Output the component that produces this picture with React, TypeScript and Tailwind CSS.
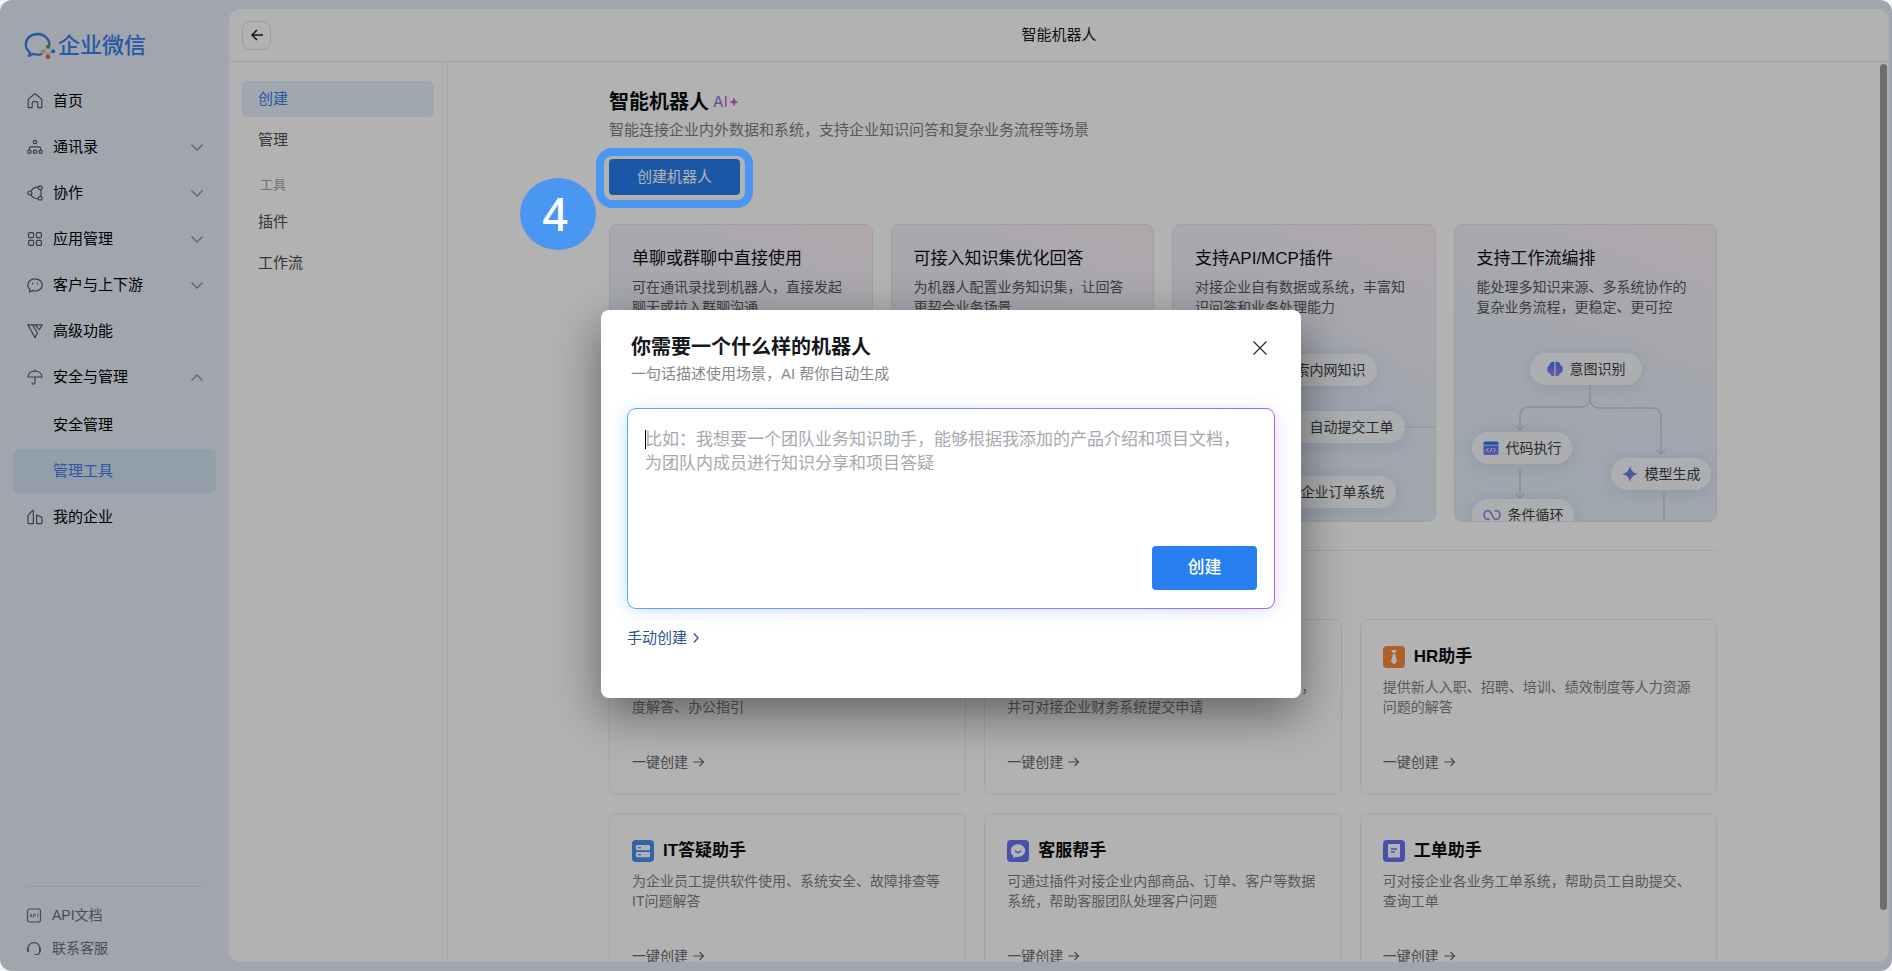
import * as React from "react";
import { clsx } from "clsx";

// ─── Sidebar icons ────────────────────────────────────────────────────────────

function Icon({ children, className }: { children: React.ReactNode; className?: string }) {
  return (
    <svg
      viewBox="0 0 16 16"
      fill="none"
      stroke="currentColor"
      strokeWidth="1.2"
      strokeLinecap="round"
      strokeLinejoin="round"
      aria-hidden="true"
      className={clsx("h-4 w-4 shrink-0", className)}
    >
      {children}
    </svg>
  );
}

const HomeIcon = (
  <Icon>
    <path d="M1.2 14.6V6.4L7 1.3a1.5 1.5 0 0 1 2 0l5.8 5.1v8.2h-4V10a1.4 1.4 0 0 0-1.4-1.4H6.6A1.4 1.4 0 0 0 5.2 10v4.6z" />
  </Icon>
);

const ContactsIcon = (
  <Icon>
    <circle cx="8" cy="3" r="1.7" />
    <circle cx="2.4" cy="12.8" r="1.7" />
    <circle cx="8" cy="12.8" r="1.7" />
    <circle cx="13.6" cy="12.8" r="1.7" />
    <path d="M2.4 11V9.4a1.6 1.6 0 0 1 1.6-1.6h8a1.6 1.6 0 0 1 1.6 1.6V11" />
  </Icon>
);

const CollabIcon = (
  <Icon>
    <circle cx="2.9" cy="8" r="2" />
    <circle cx="13.2" cy="2.8" r="1.9" />
    <circle cx="13.2" cy="13.2" r="1.9" />
    <path d="M4 6.2C5.6 3.6 8 2 11.2 2.2M4 9.8c1.6 2.6 4 4.2 7.2 4M14 4.7v6.6" />
  </Icon>
);

const AppsIcon = (
  <Icon>
    <rect x="1.6" y="1.6" width="5" height="5" rx="1" />
    <rect x="9.4" y="1.6" width="5" height="5" rx="1" />
    <rect x="1.6" y="9.4" width="5" height="5" rx="1" />
    <rect x="9.4" y="9.4" width="5" height="5" rx="1" />
  </Icon>
);

const CustomerIcon = (
  <Icon>
    <path d="M8 1.8c4 0 7.2 2.7 7.2 6.1S12 14 8 14c-.9 0-1.8-.1-2.6-.4L2.6 15l.3-2.7C1.6 11.2.8 9.6.8 7.9c0-3.4 3.2-6.1 7.2-6.1z" />
    <path d="M5.6 6.2v.6M10.4 6.2v.6" />
  </Icon>
);

const AdvancedIcon = (
  <Icon>
    <path d="M.8 1.8h4.6l5 8.2L8 14.6zM8 1.8h7.2l-2.8 4.9zM5.4 1.8H8" />
  </Icon>
);

const UmbrellaIcon = (
  <Icon>
    <path d="M8 .8v1.4M.9 8C1.2 4.6 4.2 2.2 8 2.2S14.8 4.6 15.1 8zM8 8v5.6a1.5 1.5 0 0 1-3 .2" />
  </Icon>
);

const CompanyIcon = (
  <Icon>
    <path d="M1 6.4 5.5 1.6a.5.5 0 0 1 .9.3v12.7H2a1 1 0 0 1-1-1zM9.6 6l4.5 1.9a1.4 1.4 0 0 1 .9 1.3v4.4a1 1 0 0 1-1 1H9.6z" />
  </Icon>
);

function Chevron({ open }: { open?: boolean }) {
  return (
    <svg viewBox="0 0 12 7" fill="none" stroke="#8b9099" strokeWidth="1.3" aria-hidden="true" className="h-[7px] w-3">
      {open ? <path d="M.5 6.5 6 1l5.5 5.5" /> : <path d="M.5.5 6 6 11.5.5" />}
    </svg>
  );
}

function Logo() {
  return (
    <svg viewBox="0 0 32 28" fill="none" aria-hidden="true" className="h-7 w-8">
      <path
        d="M25.5 13.5C25.5 7 20.5 2 13.5 2S1.8 7 1.8 12.6c0 3.2 1.6 6 4.1 7.9l-.8 3.4 4-1.9c2.6.8 5.7.9 8.3.1"
        stroke="#3580ea"
        strokeWidth="2.3"
        strokeLinecap="round"
        strokeLinejoin="round"
      />
      <path d="m20.500 19.500 3.900-4 3.900 3.900-4 4.200z" fill="#dfe4ee" />
      <path d="m23.800 14 3.200 3-1 .8zM18.500 20.500l3-3.700.9 1zM24.500 25.500l-3.400-4.200 1-.8zM29.500 18.800l-3.300 3.600-.9-1z" fill="#9fb5cf" />
      <circle cx="24" cy="14.6" r="2.1" fill="#4fae33" />
      <circle cx="19" cy="19.6" r="2.1" fill="#f0b53a" />
      <circle cx="24" cy="24.8" r="2.2" fill="#ee5a24" />
      <circle cx="29.2" cy="19.3" r="2" fill="#3580ea" />
    </svg>
  );
}

// ─── Data ─────────────────────────────────────────────────────────────────────

interface NavItem {
  label: string;
  icon: React.ReactNode;
  expandable?: boolean;
  children?: { label: string; active?: boolean }[];
}

const NAV: NavItem[] = [
  { label: "首页", icon: HomeIcon },
  { label: "通讯录", icon: ContactsIcon, expandable: true },
  { label: "协作", icon: CollabIcon, expandable: true },
  { label: "应用管理", icon: AppsIcon, expandable: true },
  { label: "客户与上下游", icon: CustomerIcon, expandable: true },
  { label: "高级功能", icon: AdvancedIcon },
  {
    label: "安全与管理",
    icon: UmbrellaIcon,
    expandable: true,
    children: [{ label: "安全管理" }, { label: "管理工具", active: true }],
  },
  { label: "我的企业", icon: CompanyIcon },
];

const FEATURES = [
  { title: "单聊或群聊中直接使用", text: "可在通讯录找到机器人，直接发起聊天或拉入群聊沟通" },
  { title: "可接入知识集优化回答", text: "为机器人配置业务知识集，让回答更契合业务场景" },
  { title: "支持API/MCP插件", text: "对接企业自有数据或系统，丰富知识问答和业务处理能力", art: <PluginArt /> },
  { title: "支持工作流编排", text: "能处理多知识来源、多系统协作的复杂业务流程，更稳定、更可控", art: <WorkflowArt /> },
];

const TEMPLATES = [
  {
    title: "行政助手",
    color: "bg-[#3f8cf0]",
    text: "提供考勤、假期、福利、资产等各项行政管理类制度解答、办公指引",
    glyph: <path d="M6 5h10v12H6zM9 9h4M9 12h4" stroke="#fff" strokeWidth="1.6" />,
  },
  {
    title: "财务助手",
    color: "bg-[#f5a623]",
    text: "提供报销、差旅、预算、发票等财务制度的解答，并可对接企业财务系统提交申请",
    glyph: <path d="m7 5 4 5 4-5M7 11h8M7 14h8M11 10v7" stroke="#fff" strokeWidth="1.6" />,
  },
  {
    title: "HR助手",
    color: "bg-[#fa8a3c]",
    text: "提供新人入职、招聘、培训、绩效制度等人力资源问题的解答",
    glyph: <path d="M8 4h6l-1.800 3h-2.400zM9.900 8h2.200l1.900 7.500-3 3-3-3z" fill="#fff" />,
  },
  {
    title: "IT答疑助手",
    color: "bg-[#4591f2]",
    text: "为企业员工提供软件使用、系统安全、故障排查等IT问题解答",
    glyph: (
      <>
        <rect x="4" y="5" width="14" height="5.2" rx="1.2" fill="#fff" />
        <rect x="4" y="12" width="14" height="5.2" rx="1.2" fill="#fff" />
        <path d="M6 7.600h3M6 14.600h3" stroke="#4591f2" strokeWidth="1.4" />
      </>
    ),
  },
  {
    title: "客服帮手",
    color: "bg-[#6474f5]",
    text: "可通过插件对接企业内部商品、订单、客户等数据系统，帮助客服团队处理客户问题",
    glyph: (
      <>
        <path d="M11 4.200c4 0 7.200 2.900 7.200 6.400S15 17 11 17c-.7 0-1.400-.1-2-.3L6.200 18l-.3-2.500a6.100 6.100 0 0 1-2.100-4.900C3.800 7.100 7 4.200 11 4.200z" fill="#fff" />
        <path d="M8.500 11c.8 2 4.200 2 5 0" stroke="#6474f5" strokeWidth="1.4" strokeLinecap="round" />
      </>
    ),
  },
  {
    title: "工单助手",
    color: "bg-[#6474f5]",
    text: "可对接企业各业务工单系统，帮助员工自助提交、查询工单",
    glyph: (
      <>
        <path d="M5 5a1 1 0 0 1 1-1h10a1 1 0 0 1 1 1v13l-1.500-1-1.500 1-1.500-1-1.500 1-1.500-1-1.500 1-1.500-1L5 18z" fill="#fff" />
        <path d="M8 9h6M8 12h4" stroke="#6474f5" strokeWidth="1.4" />
      </>
    ),
  },
];

// ─── Feature card artwork ─────────────────────────────────────────────────────

function Pill({ children, className }: { children: React.ReactNode; className: string }) {
  return (
    <div
      className={clsx(
        "absolute flex h-8 items-center gap-[7px] rounded-full bg-[#f8f9fb] text-sm whitespace-nowrap text-[#3a3f47] shadow-[0_2px_18px_rgba(130,165,225,0.3)]",
        className,
      )}
    >
      {children}
    </div>
  );
}

function PluginArt() {
  return (
    <div className="absolute inset-0">
      <svg viewBox="0 0 264 298" fill="none" aria-hidden="true" className="absolute top-0 left-0 h-[298px] w-[264px]">
        <path d="M200 202h64" stroke="#cbdcf2" strokeWidth="1.5" />
      </svg>
      <Pill className="top-[129px] right-[58px] pr-[11px] pl-8">检索内网知识</Pill>
      <Pill className="top-[186px] right-[30px] pr-[11px] pl-8">自动提交工单</Pill>
      <Pill className="top-[251px] right-[39px] pr-[11px] pl-8">企业订单系统</Pill>
    </div>
  );
}

function WorkflowArt() {
  return (
    <div className="absolute inset-0">
      <svg viewBox="0 0 264 298" fill="none" stroke="#cbc7e8" strokeWidth="1.3" aria-hidden="true" className="absolute top-0 left-0 h-[298px] w-[264px]">
        <defs>
          <linearGradient id="artFill" x1="0" y1="0" x2="0" y2="1">
            <stop offset="0" stopColor="#3b7df0" />
            <stop offset="1" stopColor="#9a7df0" />
          </linearGradient>
        </defs>
        <path d="M135 159v14q0 9-9 9H74q-9 0-9 9v14M61 201l4 4 4-4" />
        <path d="M135 173q0 10 9 10h53q9 0 9 9v37M202 225l4 4 4-4" />
        <path d="M65 244v29M61 269l4 4 4-4M209 268v30" />
      </svg>
      <Pill className="top-[128px] left-[75px] pr-4 pl-[17px]">
        <svg viewBox="0 0 16 16" aria-hidden="true" className="h-4 w-4">
          <path d="M7.400 1v14C5 15.600 3.400 14 3.200 12.400 1.200 12 .2 10.400.4 8.800-.2 6.800.8 5 2.400 4.400 2.800 2 5 .4 7.400 1zM8.600 1v14c2.400.6 4-1 4.200-2.600 2-.4 3-2 2.800-3.600.6-2-.4-3.800-2-4.400C13.200 2 11 .4 8.600 1z" fill="url(#artFill)" />
        </svg>
        意图识别
      </Pill>
      <Pill className="top-[207px] left-[17px] pr-2.5 pl-[11px]">
        <svg viewBox="0 0 16 16" fill="none" aria-hidden="true" className="h-4 w-4">
          <path d="M2 1.500h12a1.500 1.500 0 0 1 1.500 1.500v1.800H.5V3A1.500 1.500 0 0 1 2 1.500z" fill="#2f74e6" />
          <path d="M.5 5.600h15v7.900A1.500 1.500 0 0 1 14 15H2a1.500 1.500 0 0 1-1.500-1.500z" fill="url(#artFill)" />
          <path d="M5.500 8 3.500 10l2 2M10.500 8l2 2-2 2M8.800 8l-1.600 4" stroke="#fff" />
        </svg>
        代码执行
      </Pill>
      <Pill className="top-[233px] left-[156px] pr-2.5 pl-[11px]">
        <svg viewBox="0 0 16 16" aria-hidden="true" className="h-4 w-4">
          <path d="M8 0c.9 4.600 3 6.900 8 8-5 1.100-7.100 3.400-8 8-.9-4.600-3-6.900-8-8 5-1.100 7.100-3.400 8-8z" fill="url(#artFill)" />
        </svg>
        模型生成
      </Pill>
      <Pill className="top-[274px] left-[17px] pr-2.5 pl-[11px]">
        <svg viewBox="0 0 18 16" fill="none" stroke="#9187ea" strokeWidth="1.7" aria-hidden="true" className="h-4 w-[18px]">
          <path d="M6.500 12C3.500 13.500 1 11 1 8s2.500-5.500 5.500-4c2 1.200 3 6.800 5 8 3 1.500 5.500-1 5.500-4s-2.500-5.500-5.500-4" />
        </svg>
        条件循环
      </Pill>
    </div>
  );
}

// ─── Layout parts ─────────────────────────────────────────────────────────────

function Sidebar() {
  return (
    <aside className="flex w-[229px] shrink-0 flex-col">
      <a href="#home" className="flex items-center gap-0.5 pt-[30px] pl-6 text-[22px] leading-8 font-medium text-[#3580ea]">
        <Logo />
        <span>企业微信</span>
      </a>
      <nav aria-label="主导航" className="mt-[17px] flex flex-col gap-0.5 px-[13px] text-[15px] text-black">
        {NAV.map((item) => (
          <React.Fragment key={item.label}>
            <button
              type="button"
              aria-expanded={item.expandable ? !!item.children : undefined}
              className="flex h-11 items-center rounded-md pr-[13px] pl-3.5"
            >
              <span className="text-[#555962]">{item.icon}</span>
              <span className="flex-1 pl-2.5 text-left">{item.label}</span>
              {item.expandable && <Chevron open={!!item.children} />}
            </button>
            {item.children && (
              <div className="mt-0.5 flex flex-col gap-0.5">
                {item.children.map((c) => (
                  <a
                    key={c.label}
                    href="#sub"
                    className={clsx("flex h-11 items-center rounded-md pl-10", c.active && "bg-[#d2e3f4] text-[#3c7de8]")}
                  >
                    {c.label}
                  </a>
                ))}
              </div>
            )}
          </React.Fragment>
        ))}
      </nav>
      <div className="mx-[26px] mt-auto mb-[7px] flex flex-col border-t border-[#d5dbe6] pt-[11px] text-sm text-[#6a6e76]">
        <a href="#api" className="flex h-[33px] items-center gap-2.5">
          <Icon>
            <rect x="1.5" y="2" width="13" height="13" rx="2" />
            <path d="m4 10 1-3 1 3M7.600 10V7h1a.8.800 0 0 1 0 1.700h-1M11.800 7v3" strokeWidth=".8" />
          </Icon>
          API文档
        </a>
        <a href="#support" className="flex h-[33px] items-center gap-2.5">
          <Icon>
            <path d="M2.600 11.200A6 6 0 1 1 13.800 10M2.200 8.200v2.600M13.900 8.200v3.300a3 3 0 0 1-3 3H9" />
            <path d="M1.900 8.500v2.500M14 8.500v2.500" strokeWidth="2" />
          </Icon>
          联系客服
        </a>
      </div>
    </aside>
  );
}

function SubNav() {
  const item = "flex h-9 items-center rounded-[5px] px-4";
  return (
    <nav aria-label="智能机器人" className="flex w-[219px] shrink-0 flex-col gap-[5px] border-r border-[#ececee] px-[13px] pt-[19px] text-[15px] text-[#4b4e54]">
      <a href="#create" className={clsx(item, "bg-[#e6f0fa] text-[#3c7de8]")}>创建</a>
      <a href="#manage" className={item}>管理</a>
      <p className="flex h-9 items-center px-[18px] pt-2 text-[13px] text-[#a3a5aa]">工具</p>
      <a href="#plugin" className={item}>插件</a>
      <a href="#flow" className={item}>工作流</a>
    </nav>
  );
}

// Step marker drawn over the dimmed page
function StepMarker() {
  return (
    <>
      <div className="pointer-events-none absolute -inset-x-[13px] -top-[11px] -bottom-[13px] z-20 rounded-2xl border-8 border-[#4a96f3]" />
      <div className="pointer-events-none absolute top-[19px] right-full z-20 mr-[13px] flex h-[72px] w-[76px] items-center justify-center rounded-[50%] bg-[#4a96f3] pr-1.5 font-['Noto_Sans'] text-[45px] font-medium text-white">
        4
      </div>
    </>
  );
}

function Content() {
  return (
    <div className="relative min-w-0 flex-1 overflow-hidden pr-[11px]">
      <div className="mx-auto max-w-[1108px] pt-[26px]">
        <div className="flex items-center gap-1">
          <h1 className="text-xl leading-7 font-bold text-[#0b0d12]">智能机器人</h1>
          <span className="flex items-center gap-0.5 font-['Inter'] text-[15px] leading-7">
            <span className="bg-gradient-to-r from-[#8476f0] to-[#c06fe0] bg-clip-text font-medium text-transparent">AI</span>
            <svg viewBox="0 0 8 8" aria-hidden="true" className="h-2 w-2">
              <path d="M4 0c.4 2.500 1.100 3.300 4 4-2.900.7-3.600 1.500-4 4-.4-2.500-1.100-3.300-4-4 2.900-.7 3.600-1.500 4-4z" fill="#cf5fc0" stroke="#cf5fc0" strokeWidth=".6" />
            </svg>
          </span>
        </div>
        <p className="mt-[3px] text-[15px] leading-[22px] text-[#7d8086]">
          智能连接企业内外数据和系统，支持企业知识问答和复杂业务流程等场景
        </p>
        <div className="relative mt-[18px] w-fit">
          <button type="button" className="block h-9 rounded bg-[#267ef0] px-7 text-[15px] text-white">创建机器人</button>
          <StepMarker />
        </div>

        <div className="mt-[29px] grid grid-cols-4 gap-[18px]">
          {FEATURES.map((f) => (
            <section
              key={f.title}
              className="relative h-[298px] overflow-hidden rounded-lg border border-[#e0e4ee] bg-[linear-gradient(20deg,#e3f0f9_0%,#e9eefa_40%,#f0f0f8_70%,#f6f1f8_85%,#fcf0f6_100%)] px-[22px] pt-[22px]"
            >
              {f.art}
              <h2 className="text-[17px] leading-6 text-[#0b0d12]">{f.title}</h2>
              <p className="mt-1.5 text-sm leading-5 text-[#565960]">{f.text}</p>
            </section>
          ))}
        </div>

        <div className="mt-7 border-t border-[#ececee] pt-5">
          <h2 className="mb-5 text-lg leading-7 font-bold">从模板创建</h2>
          <div className="grid grid-cols-3 gap-[18px]">
            {TEMPLATES.map((t) => (
              <section key={t.title} className="rounded-lg border border-[#ebebed] px-[22px] pt-[25px] pb-[22px]">
                <h3 className="flex items-center gap-[9px] text-[17px] leading-6 font-bold text-[#0b0d12]">
                  <svg viewBox="0 0 22 22" fill="none" aria-hidden="true" className={clsx("h-[22px] w-[22px] rounded", t.color)}>
                    {t.glyph}
                  </svg>
                  {t.title}
                </h3>
                <p className="mt-2 text-sm leading-5 text-[#7d8086]">{t.text}</p>
                <a href="#template" className="mt-[35px] flex items-center gap-1 text-sm leading-5 text-[#66696f]">
                  一键创建
                  <svg viewBox="0 0 14 14" fill="none" stroke="currentColor" strokeWidth="1.2" aria-hidden="true" className="h-3.5 w-3.5">
                    <path d="M1.500 7h10M7.500 3l4 4-4 4" />
                  </svg>
                </a>
              </section>
            ))}
          </div>
        </div>
      </div>
      <div className="absolute top-0.5 right-0.5 h-[94%] w-[7px] rounded-full bg-[#9d9fa0]" />
    </div>
  );
}

function CreateDialog() {
  return (
    <div className="absolute inset-0 z-30 flex items-center justify-center pt-9 pl-2.5">
      <div
        role="dialog"
        aria-modal="true"
        aria-labelledby="dialog-title"
        className="w-[700px] rounded-lg bg-white px-[26px] pt-[23px] pb-12 shadow-[0_16px_48px_rgba(0,0,0,0.45)]"
      >
        <header className="flex items-start justify-between pr-2 pl-1">
          <div>
            <h2 id="dialog-title" className="text-xl leading-7 font-bold text-[#15181e]">你需要一个什么样的机器人</h2>
            <p className="text-[15px] leading-[26px] text-[#85888d]">一句话描述使用场景，AI 帮你自动生成</p>
          </div>
          <button type="button" aria-label="关闭" className="mt-2 text-[#26292e]">
            <svg viewBox="0 0 14 14" fill="none" stroke="currentColor" strokeWidth="1.2" aria-hidden="true" className="h-3.5 w-3.5">
              <path d="m.5.500 13 13M13.500.500l-13 13" />
            </svg>
          </button>
        </header>

        <div className="mt-[21px] rounded-[9px] bg-gradient-to-r from-[#5ea4ff] via-[#8a84fb] to-[#b061f5] p-px shadow-[-6px_2px_20px_-6px_rgba(100,205,255,0.45),6px_2px_20px_-6px_rgba(200,130,255,0.3)]">
          <div className="relative flex flex-col rounded-lg bg-white px-[17px] pt-[19px] pb-[18px]">
            <textarea
              aria-label="描述使用场景"
              rows={4}
              placeholder="比如：我想要一个团队业务知识助手，能够根据我添加的产品介绍和项目文档，为团队内成员进行知识分享和项目答疑"
              className="block h-[118px] w-full resize-none bg-transparent pr-3 text-[17px] leading-6 text-[#15181e] outline-none placeholder:text-[#a6a9ae]"
            />
            <span className="absolute top-[21px] left-[17px] h-[19px] w-px bg-black" />
            <button type="button" className="h-11 w-[105px] self-end rounded bg-[#267ef0] text-[17px] font-medium text-white">
              创建
            </button>
          </div>
        </div>

        <a href="#manual" className="mt-[17px] inline-flex items-center gap-1.5 text-[15px] leading-6 text-[#2b568e]">
          手动创建
          <svg viewBox="0 0 6 10" fill="none" stroke="currentColor" strokeWidth="1.3" aria-hidden="true" className="h-2.5 w-1.5">
            <path d="m.8.500 4.400 4.500L.8 9.500" />
          </svg>
        </a>
      </div>
    </div>
  );
}

export default function App() {
  return (
    <div className="h-screen bg-[#f4f4f4] font-['Liberation_Sans','Noto_Sans_CJK_SC',sans-serif]">
      <div className="relative flex h-full overflow-hidden rounded-xl bg-[#e6edfa]">
        <Sidebar />
        <main className="mt-[9px] mr-[3px] mb-[9px] flex min-w-0 flex-1 flex-col overflow-hidden rounded-xl bg-white">
          <header className="grid h-[53px] shrink-0 grid-cols-[1fr_auto_1fr] items-center border-b border-[#e9e9eb] px-[13px] text-[15px] text-[#15181e]">
            <button type="button" aria-label="返回" className="flex h-[29px] w-[29px] items-center justify-center rounded-lg border border-[#e0e0e3]">
              <svg viewBox="0 0 12 12" fill="none" stroke="currentColor" strokeWidth="1.5" aria-hidden="true" className="h-3 w-3">
                <path d="M12 6H1M6 1 1 6l5 5" />
              </svg>
            </button>
            <span>智能机器人</span>
          </header>
          <div className="flex min-h-0 flex-1">
            <SubNav />
            <Content />
          </div>
        </main>
        <div className="absolute inset-0 z-10 bg-black/30" />
        <CreateDialog />
      </div>
    </div>
  );
}
